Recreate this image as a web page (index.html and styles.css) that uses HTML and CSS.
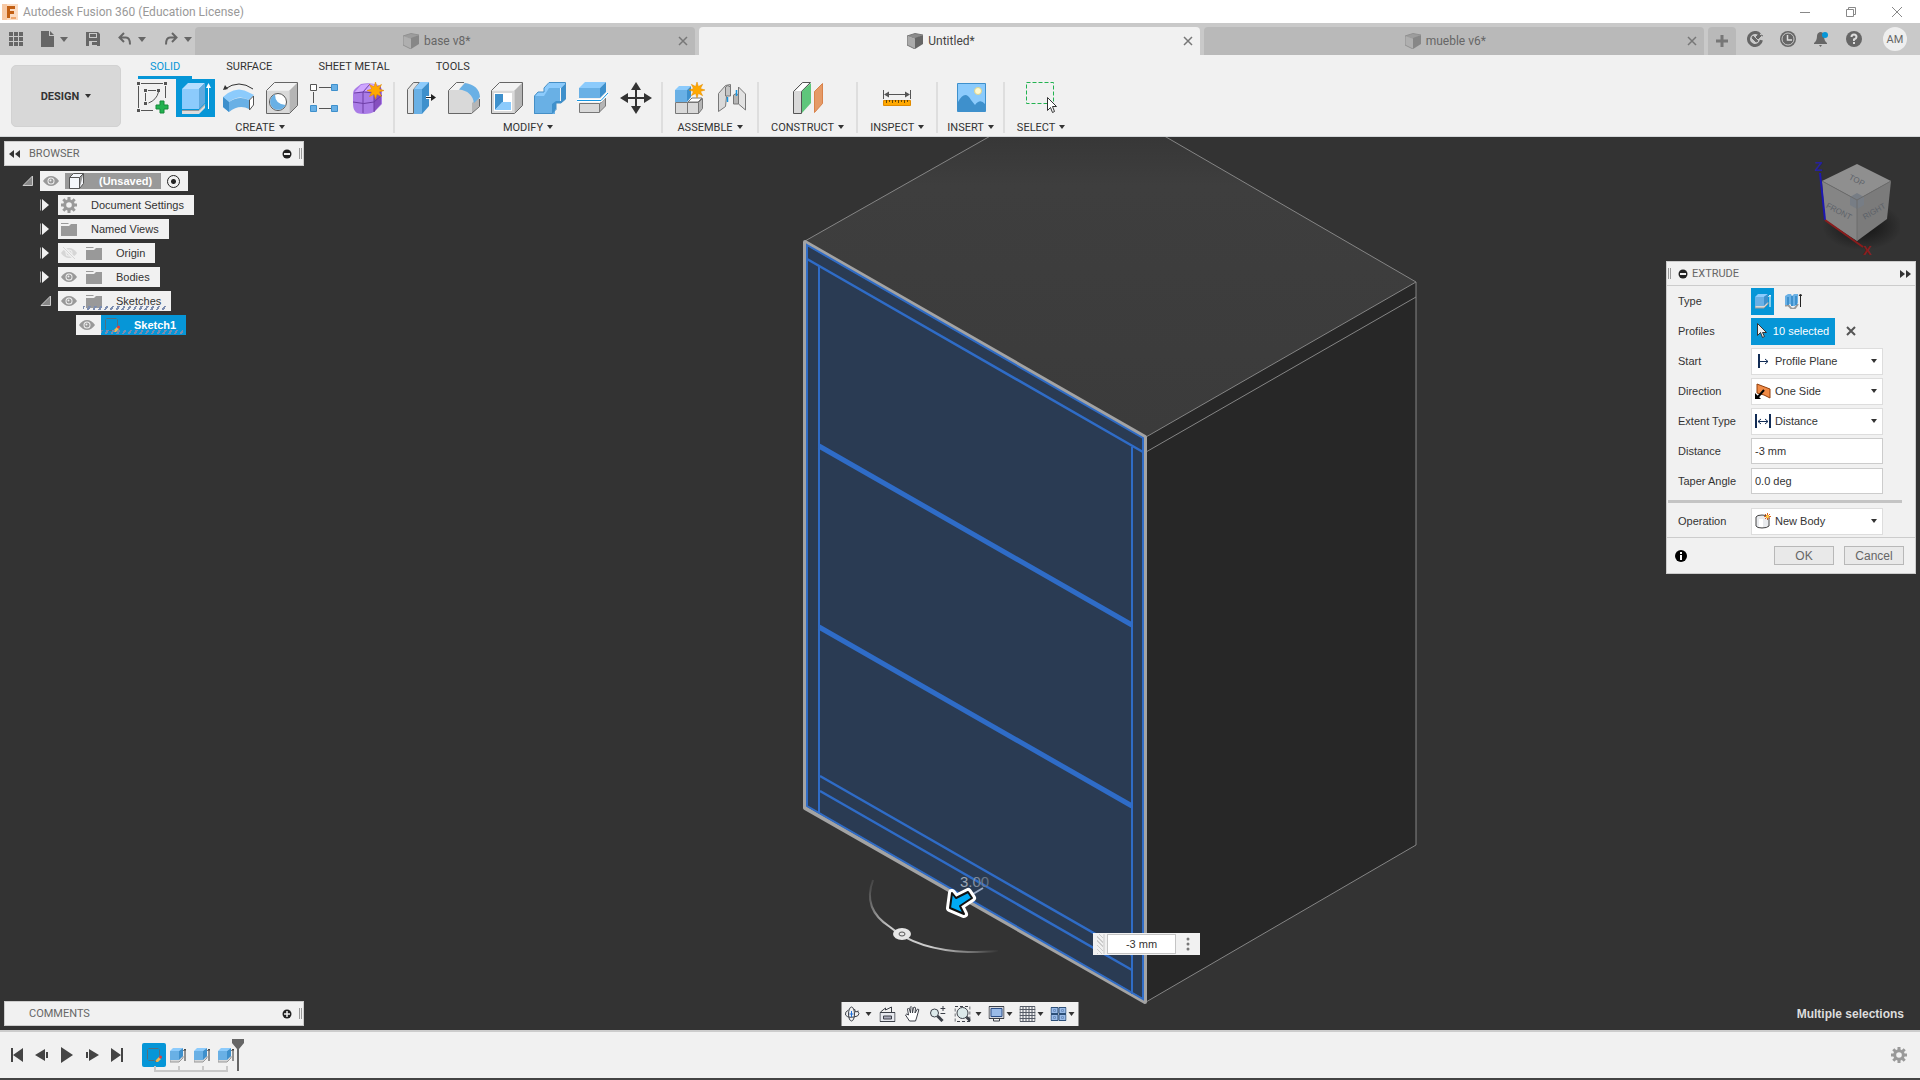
FILE: index.html
```html
<!DOCTYPE html>
<html lang="en">
<head>
    <meta charset="UTF-8">
    <meta name="viewport" content="width=device-width, initial-scale=1.0">
    <title>Autodesk Fusion 360 (Education License)</title>
    <link rel="stylesheet" href="styles.css">
</head>
<body>
    <!-- shared icons -->
    <svg class="symbols" aria-hidden="true">
        <symbol id="tab-cube" viewBox="0 0 16 16">
            <path d="M0 3 8 6v10L0 12z" fill="#aaa"/>
            <path d="M0 3 8 .5 16 2 8 6z" fill="#8c8c8c"/>
            <path d="M8 5 16 2v9l-8 5z" fill="#666"/>
            <path d="M0 3v9l8 4M0 3 8 .5 16 2" fill="none" stroke="#777"/>
        </symbol>
        <symbol id="close" viewBox="0 0 10 10">
            <path d="m1 1 8 8m0-8-8 8" stroke="#777" stroke-width="1.5"/>
        </symbol>
        <symbol id="eye" viewBox="0 0 16 16">
            <path d="M0 8Q3.5 3 8 3t8 5q-3.5 5-8 5T0 8z" fill="#999"/>
            <circle cx="8" cy="8" r="3.5" fill="#f1f1f1"/>
            <circle cx="8" cy="8" r="2.5" fill="#999"/>
            <circle cx="7.5" cy="7.5" r="1" fill="#eee"/>
        </symbol>
        <symbol id="folder" viewBox="0 0 16 16">
            <path d="M0 2h7l1 1H0zM0 5h8l2-2h6v12H0z" fill="#999"/>
        </symbol>
        <symbol id="gear" viewBox="0 0 16 16">
            <circle cx="8" cy="8" r="4.3" fill="none" stroke="#999" stroke-width="3"/>
            <path d="M8 0v3M8 13v3M0 8h3M13 8h3M2.3 2.3l2.2 2.2M11.5 11.5l2.2 2.2M2.3 13.7l2.2-2.2M11.5 4.5l2.2-2.2" stroke="#999" stroke-width="3"/>
        </symbol>
        <symbol id="closed" viewBox="0 0 10 14">
            <path d="M2 1 9 7 2 13z" fill="#f1f1f1"/>
            <path d="M.5 1.5v11" stroke="#aaa"/>
        </symbol>
        <symbol id="opened" viewBox="0 0 12 12">
            <path d="M10.500 1v9.500H1z" fill="#888" stroke="#ccc"/>
        </symbol>
        <symbol id="minus" viewBox="0 0 10 10">
            <circle cx="5" cy="5" r="4.500" fill="#222"/>
            <path d="M2 5h6" stroke="#f1f1f1" stroke-width="2"/>
        </symbol>
        <symbol id="extrude-small" viewBox="0 0 16 16">
            <path d="M0 13v2h9l4-4v-2" fill="#d8d8d8" stroke="#999"/>
            <path d="M0 4h9v9H0z" fill="#69b0e5"/>
            <path d="M0 4 3 1h10L9 4z" fill="#8ccbfc"/>
            <path d="M9 4 13 1v8l-4 4z" fill="#3e90cc"/>
            <path d="M15 3v11M13.500 4 15 2l1.500 2" stroke="currentColor" fill="none"/>
        </symbol>
        <symbol id="sketch-small" viewBox="0 0 16 16">
            <path d="M2.500 1.500h10M1.500 2.500v10M2.500 13.500h6M13.500 2.500v6" stroke="#53707f" fill="none"/>
            <path d="m9 15 1-2 3-3 2 2-3 3z" fill="#f5b74f"/>
            <path d="m9 15 .5-1.500 1 1z" fill="#555"/>
            <circle cx="14.500" cy="10" r="1.500" fill="#e5383b"/>
        </symbol>
        <symbol id="burst" viewBox="0 0 16 16">
            <path d="m8 0 1.400 4.500L13.700 2.300 11.500 6.600 16 8l-4.500 1.400 2.200 4.300-4.300-2.200L8 16l-1.400-4.500-4.300 2.200 2.200-4.300L0 8l4.500-1.400L2.300 2.300l4.300 2.200z" fill="#ffa800" stroke="#e08b00" stroke-width=".5"/>
        </symbol>
    </svg>

    <header class="titlebar">
        <svg class="logo" viewBox="0 0 16 16"><path d="M0 0h16v16H0z" fill="#fbdcc3"/><path d="M0 0h5v16H0z" fill="#f7c9a5"/><path d="M5 2h8v3H8v2h4v3H8v4H5z" fill="#c25f13"/><path d="M9 13h5v2H9z" fill="#f0a76d"/></svg>
        <span class="app-name">Autodesk Fusion 360 (Education License)</span>
        <div class="window-controls">
            <button aria-label="Minimize"><svg width="10" height="10"><path d="M0 5.500h10" stroke="#888"/></svg></button>
            <button aria-label="Restore"><svg width="10" height="10" fill="none" stroke="#888"><path d="M.5 2.500h7v7h-7zM2.500 2.500v-2h7v7h-2"/></svg></button>
            <button aria-label="Close"><svg width="10" height="10"><path d="m0 0 10 10M10 0 0 10" stroke="#888"/></svg></button>
        </div>
    </header>

    <nav class="tabbar">
        <div class="quick">
            <button aria-label="Data panel"><svg width="14" height="14" fill="#666"><path d="M0 0h4v4H0zM5 0h4v4H5zM10 0h4v4h-4zM0 5h4v4H0zM5 5h4v4H5zM10 5h4v4h-4zM0 10h4v4H0zM5 10h4v4H5zM10 10h4v4h-4z"/></svg></button>
            <button aria-label="File"><svg width="13" height="16" fill="#666"><path d="M0 0h8v5h5v11H0zM9 0l4 4H9z"/></svg><i class="caret"></i></button>
            <button aria-label="Save"><svg width="14" height="14"><path d="M0 0h12l2 2v12H0z" fill="#666"/><path d="M3 1h8v5H3zM3 9h8v5H3z" fill="#c9c9c9"/><path d="M4 2h6v3H4zM6 10h5v3H6z" fill="#666"/></svg></button>
            <button aria-label="Undo"><svg width="14" height="14" fill="none" stroke="#666" stroke-width="2"><path d="M6 1 1.500 5.500 6 10M2 5.500h6q4 0 4 7"/></svg><i class="caret"></i></button>
            <button aria-label="Redo"><svg width="14" height="14" fill="none" stroke="#666" stroke-width="2"><path d="m8 1 4.500 4.500L8 10M12 5.500H6q-4 0-4 7"/></svg><i class="caret"></i></button>
        </div>
        <div class="tabs">
            <div class="tab"><button class="tab-name"><svg class="faded"><use href="#tab-cube"/></svg>base v8*</button><button class="tab-close" aria-label="Close tab"><svg><use href="#close"/></svg></button></div>
            <div class="tab active"><button class="tab-name"><svg><use href="#tab-cube"/></svg>Untitled*</button><button class="tab-close" aria-label="Close tab"><svg><use href="#close"/></svg></button></div>
            <div class="tab"><button class="tab-name"><svg class="faded"><use href="#tab-cube"/></svg>mueble v6*</button><button class="tab-close" aria-label="Close tab"><svg><use href="#close"/></svg></button></div>
        </div>
        <button class="new-tab" aria-label="New tab"><svg width="12" height="12"><path d="M6 0v12M0 6h12" stroke="#777" stroke-width="3"/></svg></button>
        <div class="status-icons">
            <button aria-label="Extensions"><svg width="16" height="16"><circle cx="8" cy="8" r="6.500" fill="none" stroke="#666" stroke-width="3" stroke-dasharray="34 7" transform="rotate(10 8 8)"/><path d="m6 5 5 5-2 1-4-4zM9 6l3-3 2 2-3 3zM11 1l2 2M14 4l2 1" fill="#666" stroke="#666"/></svg></button>
            <button aria-label="Job status"><svg width="16" height="16"><circle cx="8" cy="8" r="8" fill="#666"/><circle cx="8" cy="8" r="6" fill="none" stroke="#c9c9c9"/><path d="M7.500 4v5H12" fill="none" stroke="#ddd" stroke-width="1.500"/></svg></button>
            <button aria-label="Notifications"><svg width="16" height="16"><path d="M1 12q3-2 3-7 0-3 3-4 4 0 4 4 0 5 3 7v1H1zM6 14h3l-1.500 2z" fill="#666"/><circle cx="12" cy="4" r="3" fill="#0696d7"/></svg></button>
            <button aria-label="Help"><svg width="16" height="16"><circle cx="8" cy="8" r="8" fill="#666"/><path d="M5.500 6q0-2.500 2.500-2.500T10.500 6Q10.500 7.500 8 8.500V10" fill="none" stroke="#ddd" stroke-width="2"/><path d="M7 11h2v2H7z" fill="#ddd"/></svg></button>
        </div>
        <button class="avatar">AM</button>
    </nav>

    <section class="ribbon">
        <button class="workspace">DESIGN <i class="caret"></i></button>
        <div class="ribbon-main">
            <div class="ribbon-tabs">
                <button class="current">SOLID</button>
                <button>SURFACE</button>
                <button>SHEET METAL</button>
                <button>TOOLS</button>
            </div>
            <div class="groups">
                <div class="group">
                    <div class="tools">
                        <button aria-label="Create Sketch"><svg viewBox="0 0 32 32"><path d="M4 1.500h22M1.500 4v22M28.500 4v12M4 28.500h12M11 8.500h8M8.500 11v8M21.500 10q-2 8-10 11" fill="none" stroke="#555"/><path d="M0 0h3v3H0zM27 0h3v3h-3zM0 27h3v3H0zM7 7h3v3H7zM20 7h3v3h-3zM7 20h3v3H7z" fill="#555"/><path d="M23 19h4v4h4v4h-4v4h-4v-4h-4v-4h4z" fill="#22b250" stroke="#168a3a"/></svg></button>
                        <button class="selected" aria-label="Extrude"><svg viewBox="0 0 32 32"><path d="M2 28h17l6-6v4l-6 6H2z" fill="#ddd"/><path d="M2 28.500h17l6-6" fill="none" stroke="#999"/><path d="M2 7h17v20H2z" fill="#8ccbfc"/><path d="m2 7 6-6h17l-6 6z" fill="#b5deff"/><path d="m19 7 6-6v20l-6 6z" fill="#5fa9df"/><path d="M28.500 3v24" stroke="#fff"/><path d="m26 6 2.500-5L31 6z" fill="#fff"/></svg></button>
                        <button aria-label="Revolve"><svg viewBox="0 0 32 32"><path d="M2 7Q16-3 30 7" fill="none" stroke="#333"/><path d="m0 8 2-5 3 4z" fill="#333"/><path d="m0 15 5-4q11-7 22 0l4 2-5 5q-10-6-20 2z" fill="#8ccbfc"/><path d="m0 15 6 5q10-7 20-2v9q-10-5-20 3l-6-5z" fill="#69b0e5"/><path d="m0 15 6 5v10l-6-5z" fill="#3e90cc"/><path d="m26.500 18 4-4v9l-4 5z" fill="#fff" stroke="#555"/></svg></button>
                        <button aria-label="Hole"><svg viewBox="0 0 32 32"><path d="M.5 8.500h23v23H.5z" fill="#d9d9d9"/><path d="m.5 8.500 8-8h23l-8 8z" fill="#f3f3f3"/><path d="m23.500 8.500 8-8v23l-8 8z" fill="#b5b5b5"/><path d="m.5 8.500 8-8h23v23l-8 8H.5z" fill="none" stroke="#666"/><circle cx="12" cy="20" r="8.500" fill="#fff" stroke="#555"/><path d="M9 12.500a8 8 0 1 0 10.500 10.500Q9 22 9 12.500z" fill="#69b0e5"/></svg></button>
                        <button aria-label="Rectangular Pattern"><svg viewBox="0 0 32 32"><path d="M10 5.500h12M4.500 10v11M10 26.500h12" stroke="#555"/><path d="M1.500 2.500h6v6h-6z" fill="#fff" stroke="#555"/><path d="M22.500 2.500h6v6h-6zM1.500 23.500h6v6h-6zM22.500 23.500h6v6h-6z" fill="#69b0e5" stroke="#3e90cc"/></svg></button>
                        <button aria-label="Create Form"><svg viewBox="0 0 32 32"><path d="M1 12q0-4 3-6l5-4q9-2 17 1 4 2 4 6v13l-7 7q-3 3-11 3T3 29q-2-2-2-8z" fill="#a97be6"/><path d="M2 11 9 3q8-2 17 0l-4 7q-10-2-20 1z" fill="#cfa6ff"/><path d="M22 10l7-6v18l-7 8z" fill="#8650bf"/><path d="M1 20q11 3 21 0l8-7M11 31V10l7-8M2 11q10-2 20 0v19" fill="none" stroke="#6d3da5"/><use href="#burst" x="15" y="0" width="17" height="17"/></svg></button>
                    </div>
                    <button class="group-name">CREATE <i class="caret"></i></button>
                </div>
                <div class="divider"></div>
                <div class="group">
                    <div class="tools">
                        <button aria-label="Press Pull"><svg viewBox="0 0 32 32"><path d="m2.500 7.500 6-7h6l-6 7v24h-6z" fill="#e5e5e5" stroke="#666"/><path d="M9 7h8v25H9z" fill="#69b0e5"/><path d="m9 7 6-7h9l-7 7z" fill="#8ccbfc"/><path d="m17 7 7-7v24l-7 8z" fill="#3e90cc"/><path d="M21 15.500h8" stroke="#fff" stroke-width="3"/><path d="M21 15.500h6" stroke="#222"/><path d="m26 12 5 3.500-5 3.500z" fill="#222"/></svg></button>
                        <button aria-label="Fillet"><svg viewBox="0 0 32 32"><path d="M.5 8.500 8 .5h8q14 3 15.500 13v11l-8 7H.5z" fill="#d9d9d9"/><path d="m24 21 7-6v9l-7 7z" fill="#b5b5b5"/><path d="m1 8 7-7h8l-5 7z" fill="#f3f3f3"/><path d="M11 7.500 17 1q14 2 15 14l-6 6Q24 9 11 7.500z" fill="#69b0e5"/><path d="M31.500 17v7.500l-8 7H.5v-23l8-8H16" fill="none" stroke="#666"/></svg></button>
                        <button aria-label="Shell"><svg viewBox="0 0 32 32"><path d="M.5 8.500h23v23H.5z" fill="#d9d9d9"/><path d="m.5 8.500 8-8h23l-8 8z" fill="#f3f3f3"/><path d="m23.500 8.500 8-8v23l-8 8z" fill="#b5b5b5"/><path d="m.5 8.500 8-8h23v23l-8 8H.5z" fill="none" stroke="#666"/><path d="M3 11h18v18H3z" fill="#fff"/><path d="M4 12h8v8l-8 8z" fill="#3e90cc"/><path d="M4 28l7-8h9v8z" fill="#8ccbfc"/></svg></button>
                        <button aria-label="Combine"><svg viewBox="0 0 32 32"><path d="M0 14h10V6h16v15h-5v11H0z" fill="#69b0e5"/><path d="m0 14 4-4h6V6l5-5h17l-5 5H15l-5 8z" fill="#8ccbfc"/><path d="m27 6 5-5v16l-5 4h-5v6l-4 5V22l4-3h5z" fill="#3e90cc"/><path d="M.5 14v17.500H18l4-4V21h5l4.500-4V.5H15L10 6v4H4z" fill="none" stroke="#458fc6"/></svg></button>
                        <button aria-label="Split Body"><svg viewBox="0 0 32 32"><path d="M2 6h21v10H2z" fill="#69b0e5"/><path d="m2 6 6-6h21l-6 6z" fill="#8ccbfc"/><path d="m23 6 6-6v10l-6 6z" fill="#3e90cc"/><path d="M2.500 21.500h20v9h-20z" fill="#d9d9d9" stroke="#777"/><path d="m22.500 22 6-6v8l-6 6z" fill="#b5b5b5" stroke="#777"/><path d="M0 18.500h24L31 11" fill="none" stroke="#fff" stroke-width="3"/><path d="M0 18.500h24L31 11" fill="none" stroke="#1595e0"/></svg></button>
                        <button aria-label="Move"><svg viewBox="0 0 32 32"><path d="M16 5v22M5 16h22" stroke="#333" stroke-width="2"/><path d="m16 0 5 8H11zM16 32l5-8H11zM0 16l8-5v10zM32 16l-8-5v10z" fill="#333"/></svg></button>
                    </div>
                    <button class="group-name">MODIFY <i class="caret"></i></button>
                </div>
                <div class="divider"></div>
                <div class="group">
                    <div class="tools">
                        <button aria-label="New Component"><svg viewBox="0 0 32 32"><path d="M2.500 20.500h12v11h-12zM14.500 20.500h11v11h-11z" fill="#d9d9d9" stroke="#777"/><path d="m15 20 4-4h10l-4 4z" fill="#fff" stroke="#777"/><path d="m25.500 20.500 4-4v10l-4 5z" fill="#b5b5b5" stroke="#777"/><path d="M2 8h12v12H2z" fill="#69b0e5"/><path d="m2 8 4-4h12l-4 4z" fill="#8ccbfc"/><path d="m14 8 4-4v11l-4 5z" fill="#3e90cc"/><use href="#burst" x="16" y="0" width="16" height="16"/></svg></button>
                        <button aria-label="Joint"><svg viewBox="0 0 32 32"><path d="m2.500 11.500 7-8 5-1v8l-4 4-1 10-7 5z" fill="#d9d9d9" stroke="#777"/><path d="M9.500 5q2-3 5 0v9h-5z" fill="#c4c4c4" stroke="#777"/><path d="m22.500 5 7 7v16l-7-6z" fill="#e2e2e2" stroke="#777"/><path d="M17.500 13q3-3 5 0v9h-5z" fill="#b5b5b5" stroke="#777"/><path d="M11.500 15v5M20.500 8v6" stroke="#1595e0" stroke-width="1.500"/></svg></button>
                    </div>
                    <button class="group-name">ASSEMBLE <i class="caret"></i></button>
                </div>
                <div class="divider"></div>
                <div class="group">
                    <div class="tools"><button aria-label="Offset Plane"><svg viewBox="0 0 32 32"><path d="m1.500 9.500 9-9h8l-9 9v22h-8z" fill="#d9d9d9" stroke="#555"/><path d="m3 9 8-8h6L9 9z" fill="#fff"/><path d="m10 9 9-8v20l-9 10z" fill="#5fc67b"/><path d="m22.500 9.500 8-8v20l-8 9z" fill="#e59a66" stroke="#d9824a"/></svg></button></div>
                    <button class="group-name">CONSTRUCT <i class="caret"></i></button>
                </div>
                <div class="divider"></div>
                <div class="group">
                    <div class="tools"><button aria-label="Measure"><svg viewBox="0 0 32 32"><path d="M2.500 8v9M29.500 8v9M5 12.500h22" stroke="#555"/><path d="m3 12.500 5-3v6zM29 12.500l-5-3v6z" fill="#555"/><path d="M2.500 18.500h27v5h-27z" fill="#ffa800" stroke="#e08b00"/><path d="M5.500 18v3M8.500 18v2M11.500 18v3M14.500 18v2M17.500 18v3M20.500 18v2M23.500 18v3M26.500 18v2" stroke="#6a4800"/></svg></button></div>
                    <button class="group-name">INSPECT <i class="caret"></i></button>
                </div>
                <div class="divider"></div>
                <div class="group narrow">
                    <div class="tools"><button aria-label="Decal"><svg viewBox="0 0 32 32"><path d="M2.500 1.500h28v28h-28z" fill="#8ccbfc"/><path d="M3 20q7-13 13-2l4 5q5-7 10-1v8H3z" fill="#3e90cc"/><circle cx="23" cy="9" r="3.500" fill="#fff9cf" stroke="#ddd48d"/><path d="M2.500 1.500h28v28h-28z" fill="none" stroke="#3e90cc"/></svg></button></div>
                    <button class="group-name">INSERT <i class="caret"></i></button>
                </div>
                <div class="divider"></div>
                <div class="group">
                    <div class="tools"><button aria-label="Select"><svg viewBox="0 0 32 32"><path d="M1.500 .5h27v21h-27z" fill="none" stroke="#22b250" stroke-dasharray="4 2"/><path d="M22.500 15.500v13l3-3 2 5 2-1-2-5h4z" fill="#fff" stroke="#333"/></svg></button></div>
                    <button class="group-name">SELECT <i class="caret"></i></button>
                </div>
            </div>
        </div>
    </section>

    <main class="canvas">
        <svg class="model" viewBox="0 137 1920 893" preserveAspectRatio="xMidYMid slice">
            <defs>
                <linearGradient id="top-face" x1="0" y1="0" x2="0" y2="1"><stop offset="0" stop-color="#363636"/><stop offset=".18" stop-color="#3e3e3e"/><stop offset="1" stop-color="#3b3b3b"/></linearGradient>
                <linearGradient id="arc-fade" gradientUnits="userSpaceOnUse" x1="868" y1="878" x2="998" y2="953"><stop offset="0" stop-color="#ddd" stop-opacity="0"/><stop offset=".3" stop-color="#ccc"/><stop offset=".6" stop-color="#ccc"/><stop offset="1" stop-color="#ddd" stop-opacity="0"/></linearGradient>
                <linearGradient id="size-fade"><stop offset="0" stop-color="#a9b3c0"/><stop offset="1" stop-color="#5d6b7d"/></linearGradient>
            </defs>
            <!-- cabinet body -->
            <path d="M805 241 1001 130h153l262 152-270 155z" fill="url(#top-face)"/>
            <path d="m1146 437 270-155v563l-270 157z" fill="#272727"/>
            <path d="M805 241 1001 130M1154 130l262 152v563l-270 157M1416 282l-270 155M1416 297l-270 155" fill="none" stroke="#858585"/>
            <!-- selected front profiles -->
            <path d="m805 242 340 195v565L805 808z" fill="#2a3b53" stroke="#a3a3a3" stroke-width="4" stroke-linejoin="round"/>
            <path d="m807 245 336 193v561L807 806z" fill="none" stroke="#2f6cc7" stroke-width="2"/>
            <path d="M819 266v547M1132 447v547" stroke="#2f6cc7" stroke-width="2"/>
            <path d="m807 259 336 193M820 776l312 179M820 791l312 179" fill="none" stroke="#2f6cc7" stroke-width="2.500"/>
            <path d="m819 446 313 179M819 627l313 179" fill="none" stroke="#2f6cc7" stroke-width="5"/>
            <!-- manipulator -->
            <path d="M873 880q-11 29 17 47 27 23 78 25 18 0 30-1" fill="none" stroke="url(#arc-fade)" stroke-width="2"/>
            <ellipse cx="902" cy="934" rx="9" ry="6" fill="#e6e6e6"/>
            <ellipse cx="902" cy="934" rx="3" ry="2" fill="none" stroke="#555"/>
            <path d="m968 897 15-9" stroke="#9aabc6" stroke-width="2"/>
            <text class="size" x="960" y="887" fill="url(#size-fade)">3.00</text>
            <path d="m950 908 2-15 4 5 12-6 4 6-12 8 4 8z" fill="#fff" stroke="#fff" stroke-width="8" stroke-linejoin="round"/>
            <path d="m950 908 2-15 4 5 12-6 4 6-12 8 4 8z" fill="#00a9f4" stroke="#111" stroke-width="2" stroke-linejoin="round"/>
        </svg>

        <div class="left-side">
            <section class="browser">
                <div class="palette-bar">
                    <svg width="11" height="8" fill="#333"><path d="m5 0v8L0 4zM11 0v8L6 4z"/></svg>
                    <span>BROWSER</span>
                    <svg width="10" height="10"><use href="#minus"/></svg>
                    <i class="grip"></i>
                </div>
                <ul class="tree">
                    <li class="root">
                        <button class="toggle" aria-label="Collapse"><svg width="12" height="12"><use href="#opened"/></svg></button>
                        <div class="node"><svg><use href="#eye"/></svg><span class="doc"><svg><path d="M1.500 4.500h10v11h-10zM1.500 4.500l4-4h10l-4 4M11.500 15.500l4-5V.5" fill="#f4f6fa" stroke="#555"/></svg><b>(Unsaved)</b></span>
                        <input type="radio" name="active-component" aria-label="Activate component" checked></div>
                    </li>
                    <li><button class="toggle" aria-label="Expand"><svg width="10" height="14"><use href="#closed"/></svg></button><div class="node"><svg><use href="#gear"/></svg><span>Document Settings</span></div></li>
                    <li><button class="toggle" aria-label="Expand"><svg width="10" height="14"><use href="#closed"/></svg></button><div class="node"><svg><use href="#folder"/></svg><span>Named Views</span></div></li>
                    <li><button class="toggle" aria-label="Expand"><svg width="10" height="14"><use href="#closed"/></svg></button><div class="node"><svg class="hidden-eye"><use href="#eye"/><path d="m2 2 12 12" stroke="#f1f1f1" stroke-width="3"/><path d="m2 2 12 12" stroke="#999"/></svg><svg><use href="#folder"/></svg><span>Origin</span></div></li>
                    <li><button class="toggle" aria-label="Expand"><svg width="10" height="14"><use href="#closed"/></svg></button><div class="node"><svg><use href="#eye"/></svg><svg><use href="#folder"/></svg><span>Bodies</span></div></li>
                    <li><button class="toggle" aria-label="Collapse"><svg width="12" height="12"><use href="#opened"/></svg></button><div class="node hatched"><svg><use href="#eye"/></svg><svg><use href="#folder"/></svg><span>Sketches</span></div></li>
                    <li class="leaf"><div class="node picked hatched"><svg><use href="#eye"/></svg><svg><use href="#sketch-small"/></svg><b>Sketch1</b></div></li>
                </ul>
            </section>
            <section class="palette-bar comments">
                <span>COMMENTS</span>
                <svg width="10" height="10"><circle cx="5" cy="5" r="4.500" fill="#222"/><path d="M2 5h6M5 2v6" stroke="#f1f1f1" stroke-width="1.500"/></svg>
                <i class="grip"></i>
            </section>
        </div>

        <svg class="viewcube" viewBox="1800 150 100 110">
            <defs><radialGradient id="cube-shadow"><stop offset="0" stop-color="#111"/><stop offset="1" stop-color="#333"/></radialGradient></defs>
            <ellipse cx="1862" cy="226" rx="40" ry="24" fill="url(#cube-shadow)"/>
            <path d="m1822 181 35-17 34 17-34 19z" fill="#8f8f8f"/>
            <path d="m1822 181 35 19v41l-32-21z" fill="#858585"/>
            <path d="m1857 200 34-19-4 38-30 22z" fill="#7b7b7b"/>
            <path d="m1850 197 7-4 7 4v8l-7 4-7-4z" fill="#777d85"/>
            <path d="m1822 181 35 19 34-19M1857 200v41" fill="none" stroke="#6c6c6c"/>
            <text x="1857" y="183" transform="rotate(27 1857 180)">TOP</text>
            <text x="1839" y="214" transform="rotate(28 1839 211)">FRONT</text>
            <text x="1874" y="214" transform="rotate(-30 1874 211)">RIGHT</text>
            <path d="m1820 173 5 47" stroke="#1d17b3" stroke-width="2"/>
            <path d="m1825 220 38 27" stroke="#8a1c1c" stroke-width="2"/>
            <text class="axis axis-z" x="1819" y="171">Z</text>
            <text class="axis axis-x" x="1867" y="255">X</text>
        </svg>

        <form class="extrude" onsubmit="return false">
            <h2><i class="grip"></i><svg width="10" height="10"><use href="#minus"/></svg><span>EXTRUDE</span><svg width="11" height="8" fill="#333"><path d="m0 0 5 4-5 4zM6 0l5 4-5 4z"/></svg></h2>
            <div class="field">
                <span class="field-name">Type</span>
                <button class="type on" aria-label="Extrude"><svg width="16" height="16"><use href="#extrude-small"/></svg></button>
                <button class="type" aria-label="Thin Extrude"><svg width="17" height="16"><path d="M0 13q3-2 5 1t5 1l3-4" fill="none" stroke="#999" stroke-width="2"/><path d="M0 3l3-2h3l1 2 2-2h4v9l-3 3H7l-2-2-2 1H0z" fill="#69b0e5"/><path d="M3 4v8M7 3v10M11 3v9" stroke="#3e90cc" stroke-width="2"/><path d="M15.500 2v12M14 3l1.500-2L17 3" fill="none" stroke="#222"/></svg></button>
            </div>
            <div class="field">
                <span class="field-name">Profiles</span>
                <button class="pick"><svg width="10" height="16"><path d="M.5.5v12l3-3 2 5 2-1-2-4h4z" fill="#eee" stroke="#333"/></svg>10 selected</button>
                <button class="clear" aria-label="Clear selection"><svg width="10" height="10"><path d="m1 1 8 8m0-8-8 8" stroke="#555" stroke-width="2"/></svg></button>
            </div>
            <div class="field">
                <label for="start">Start</label>
                <div class="combo"><svg width="16" height="16"><path d="M4 1v14" stroke="#122c55" stroke-width="2"/><path d="M5 8.500h8M10 6l3 2.500L10 11" fill="none" stroke="#122c55"/></svg><select id="start"><option>Profile Plane</option></select><i class="caret"></i></div>
            </div>
            <div class="field">
                <label for="direction">Direction</label>
                <div class="combo"><svg width="16" height="16"><path d="m2 1 13 5v9L9 12 2 10z" fill="#f08a45" stroke="#913e0b"/><path d="m9 7-7 8" stroke="#000" stroke-width="2"/><path d="M0 16v-6l6 6z"/></svg><select id="direction"><option>One Side</option></select><i class="caret"></i></div>
            </div>
            <div class="field">
                <label for="extent">Extent Type</label>
                <div class="combo"><svg width="16" height="16"><path d="M1 1v14M15 1v14" stroke="#122c55" stroke-width="2"/><path d="M3 8.500h10M6 6 3 8.500 6 11M10 6l3 2.500-3 2.500" fill="none" stroke="#122c55"/></svg><select id="extent"><option>Distance</option></select><i class="caret"></i></div>
            </div>
            <div class="field">
                <label for="distance">Distance</label>
                <input type="text" id="distance" value="-3 mm">
            </div>
            <div class="field">
                <label for="taper">Taper Angle</label>
                <input type="text" id="taper" value="0.0 deg">
            </div>
            <div class="rule"></div>
            <div class="field">
                <label for="operation">Operation</label>
                <div class="combo"><svg width="16" height="16"><path d="M1 4v9q1 2 6 2t7-2V4q-2-2-7-2T1 4z" fill="#e9ebee" stroke="#444"/><path d="M4 6h4v8H4z" fill="#fff"/><path d="M12.500 0v7M9 3.500h7M10 1l5 5M15 1l-5 5" stroke="#e0641a"/><circle cx="12.500" cy="3.500" r="1.500" fill="#ffd24a"/></svg><select id="operation"><option>New Body</option></select><i class="caret"></i></div>
            </div>
            <div class="actions">
                <svg width="12" height="12"><circle cx="6" cy="6" r="6"/><path d="M5 2h2v2H5zM5 5h2v5H5z" fill="#fff"/></svg>
                <button>OK</button>
                <button>Cancel</button>
            </div>
        </form>

        <div class="float-input">
            <i class="handle"></i>
            <input type="text" value="-3 mm" aria-label="Distance">
            <button aria-label="More"><svg width="4" height="14" fill="#777"><circle cx="2" cy="2" r="1.500"/><circle cx="2" cy="7" r="1.500"/><circle cx="2" cy="12" r="1.500"/></svg></button>
        </div>

        <div class="navbar">
            <button class="spaced" aria-label="Orbit"><svg viewBox="0 0 16 16" fill="none" stroke="#3c4048"><ellipse cx="7" cy="8" rx="3" ry="7"/><path d="M4 4q-4 2-3 5 3 4 12 1 3-2 0-5"/><path d="M7 5v6M5 8h4" stroke="#1d6ed8"/><path d="m10 3 1 3 3-1"/></svg><i class="caret"></i></button>
            <button class="plain" aria-label="Look At"><svg viewBox="0 0 16 16" fill="none" stroke="#3c4048"><path d="M.5 6.500h15v9H.5z" fill="#e8eaf0"/><path d="M4 10h8v3H4z" fill="#aab"/><path d="m1 6 5-4v2l6-3v5"/></svg></button>
            <button class="plain" aria-label="Pan"><svg viewBox="0 0 16 16" fill="#fff" stroke="#3c4048"><path d="M5 15 1 9q1-2 3 0L3 3q1-2 2 0l1 4-.5-5.500q1.500-2 2 0L8 7l1-5.500q2-1 2 .5l-.5 5L13 3q2 0 1 2l-2 7-1 3z"/></svg></button>
            <button class="plain" aria-label="Zoom"><svg viewBox="0 0 16 16" fill="none" stroke="#3c4048"><circle cx="5" cy="7" r="4" fill="#dce9ea"/><path d="m8 10 5 5" stroke-width="3"/><path d="M13.500 0v5M11 2.500h5M11 7.500h5"/></svg></button>
            <button class="spaced" aria-label="Fit"><svg viewBox="0 0 16 16" fill="none" stroke="#3c4048"><path d="M.5.500h15v15H.5z" stroke-dasharray="3 2"/><circle cx="8" cy="7" r="5.500" fill="#dce9ea"/><path d="m12 11 4 4" stroke-width="3"/></svg><i class="caret"></i></button>
            <button aria-label="Display Settings"><svg viewBox="0 0 16 16" fill="none" stroke="#3c4048"><path d="M.5.500h15v12H.5z" fill="#d6d8dd"/><path d="M2.500 2.500h11v8h-11z" fill="#9abbe8" stroke="#2c4f88"/><path d="M5 13v2h6v-2"/></svg><i class="caret"></i></button>
            <button aria-label="Grid"><svg viewBox="0 0 16 16" fill="none" stroke="#555b66"><path d="M.5.500h15v15H.5zM3.500 0v16M6.500 0v16M9.500 0v16M12.500 0v16M0 3.500h16M0 6.500h16M0 9.500h16M0 12.500h16"/></svg><i class="caret"></i></button>
            <button aria-label="Viewports"><svg viewBox="0 0 16 16" fill="#9abbe8" stroke="#2c4f78"><path d="M.5 1.500h7v6h-7zM8.500 1.500h7v6h-7zM.5 8.500h7v6h-7zM8.500 8.500h7v6h-7z"/><path d="M3 3.500h2v2H3zM11 3.500h2v2h-2zM3 10.500h2v2H3zM11 10.500h2v2h-2z" stroke="#6f92c2"/></svg><i class="caret"></i></button>
        </div>

        <p class="selection-info">Multiple selections</p>
    </main>

    <footer class="timeline">
        <div class="player">
            <button aria-label="Go to start"><svg viewBox="0 0 16 16"><path d="M2 1h2v14H2zM14 1v14L4 8z"/></svg></button>
            <button aria-label="Step back"><svg viewBox="0 0 16 16"><path d="M11 2v12L1 8zM12 5h2v6h-2z"/></svg></button>
            <button aria-label="Play"><svg viewBox="0 0 16 16"><path d="m2 0 12 8-12 8z"/></svg></button>
            <button aria-label="Step forward"><svg viewBox="0 0 16 16"><path d="m5 2 10 6-10 6zM2 5h2v6H2z"/></svg></button>
            <button aria-label="Go to end"><svg viewBox="0 0 16 16"><path d="M12 1h2v14h-2zM2 1l10 7-10 7z"/></svg></button>
        </div>
        <div class="features">
            <button class="on" aria-label="Sketch1"><svg><use href="#sketch-small"/></svg></button>
            <button aria-label="Extrude1"><svg><use href="#extrude-small"/></svg></button>
            <button aria-label="Extrude2"><svg><use href="#extrude-small"/></svg></button>
            <button aria-label="Extrude3"><svg><use href="#extrude-small"/></svg></button>
            <svg class="links" viewBox="0 0 75 7"><path d="M1 0v5h73M25 0v5M49 0v5M73 0v5" fill="none" stroke="#c9c9c9" stroke-width="2"/></svg>
        </div>
        <svg class="marker" viewBox="0 0 12 32"><path d="M0 0h12v4L7 10v22H5V10L0 4z" fill="#666"/></svg>
        <button class="settings" aria-label="Timeline settings"><svg width="16" height="16"><use href="#gear"/></svg></button>
    </footer>
</body>
</html>
```

FILE: styles.css
```css
* {
    margin: 0;
    padding: 0;
    box-sizing: border-box;
}

body {
    display: flex;
    flex-direction: column;
    height: 100vh;
    overflow: hidden;
    background: #f1f1f1;
    color: #333;
    font-family: "Liberation Sans", Arial, sans-serif;
    font-size: 11px;
}

button {
    display: flex;
    align-items: center;
    justify-content: center;
    border: none;
    background: none;
    color: inherit;
    font: inherit;
}

svg {
    display: block;
    flex: none;
}

.symbols {
    position: absolute;
    width: 0;
    height: 0;
}

.caret {
    width: 0;
    height: 0;
    border: 3px solid transparent;
    border-top: 4px solid #333;
    border-bottom: none;
}

/* title bar */
.titlebar {
    display: flex;
    align-items: center;
    height: 23px;
    padding-left: 2px;
    background: #fff;
}

.logo {
    width: 16px;
    height: 16px;
}

.app-name {
    flex: 1;
    margin-left: 5px;
    color: #999;
    font-family: Roboto, sans-serif;
    font-size: 12px;
}

.window-controls {
    display: flex;
}

.window-controls button {
    width: 46px;
    height: 20px;
}

/* document tabs */
.tabbar {
    display: flex;
    height: 32px;
    background: #c9c9c9;
    color: #666;
    font-family: Roboto, sans-serif;
}

.quick {
    display: flex;
    width: 195px;
    padding-left: 9px;
    gap: 18px;
}

.quick button {
    gap: 6px;
}

.quick .caret {
    border-width: 5px 4px 0;
    border-top-color: #666;
}

.tabs {
    display: flex;
    flex: 1;
    gap: 4px;
    padding-top: 4px;
}

.tab {
    display: flex;
    flex: 1;
    padding-right: 7px;
    border-radius: 4px 4px 0 0;
    background: #b9b9b9;
    font-size: 12px;
}

.tab.active {
    background: #f1f1f1;
    color: #444;
}

.tab-name {
    flex: 1;
    gap: 5px;
}

.tab-name svg {
    width: 16px;
    height: 16px;
}

.tab-name .faded {
    opacity: 0.6;
}

.tab-close svg {
    width: 10px;
    height: 10px;
}

.new-tab {
    width: 28px;
    margin: 4px 11px 0 4px;
    border-radius: 4px 4px 0 0;
    background: #b9b9b9;
}

.status-icons {
    display: flex;
    gap: 17px;
}

.avatar {
    width: 24px;
    height: 24px;
    margin: 4px 13px 4px 21px;
    border-radius: 50%;
    background: #eee;
}

/* ribbon */
.ribbon {
    display: flex;
    height: 82px;
    border-bottom: 1px solid #d5d8da;
    font-family: Roboto, sans-serif;
}

.workspace {
    gap: 6px;
    width: 110px;
    height: 62px;
    margin: 10px 7px 0 11px;
    border: 1px solid #d2d2d2;
    border-radius: 5px;
    background: #d8d8d8;
    font-weight: bold;
}

.ribbon-tabs {
    display: flex;
    gap: 22px;
    height: 24px;
    padding-left: 10px;
}

.ribbon-tabs button {
    padding: 0 12px;
    border-top: 1px solid transparent;
    border-bottom: 3px solid transparent;
}

.ribbon-tabs .current {
    border-bottom-color: #0696d7;
    color: #0696d7;
}

.groups {
    display: flex;
}

.group {
    display: flex;
    flex-direction: column;
    align-items: center;
    padding: 0 3px;
}

.tools {
    display: flex;
}

.tools button {
    width: 39px;
    height: 38px;
    margin: 0 2px;
}

.tools .selected {
    background: #0696d7;
}

.tools svg {
    width: 32px;
    height: 32px;
}

.group-name {
    gap: 4px;
    height: 20px;
    padding: 0 8px;
}

.group.narrow {
    padding: 0;
}

.divider {
    width: 2px;
    height: 51px;
    margin: 3px 1px 0;
    background: #dedede;
}

/* canvas */
.canvas {
    position: relative;
    flex: 1;
    display: flex;
    justify-content: space-between;
    align-items: flex-start;
    min-height: 0;
    padding: 4px;
    background: #333;
}

.model {
    position: absolute;
    top: 0;
    left: 0;
    width: 100%;
    height: 100%;
}

.size {
    font-family: "Liberation Sans", Arial, sans-serif;
    font-size: 15px;
}

.left-side {
    position: relative;
    display: flex;
    flex-direction: column;
    justify-content: space-between;
    width: 300px;
    height: 100%;
}

.palette-bar {
    display: flex;
    align-items: center;
    height: 25px;
    padding: 0 1px 0 4px;
    border: 1px solid #ccc;
    background: #f1f1f1;
    color: #666;
    font-family: Roboto, sans-serif;
}

.palette-bar span {
    flex: 1;
    margin-left: 9px;
}

.palette-bar.comments span {
    margin-left: 20px;
}

.grip {
    width: 3px;
    height: 11px;
    border: 1px solid #999;
    border-width: 0 1px;
}

.palette-bar .grip {
    margin-left: 7px;
}

.tree {
    list-style: none;
    padding: 5px 0 0 36px;
}

.tree li {
    display: flex;
    height: 20px;
    margin-bottom: 4px;
}

.tree .root {
    margin-left: -18px;
}

.tree .leaf {
    margin-left: 36px;
}

.toggle {
    width: 18px;
    padding-right: 1px;
    justify-content: flex-start;
}

.node {
    position: relative;
    display: flex;
    align-items: center;
    gap: 9px;
    padding: 0 10px 0 3px;
    background: #f1f1f1;
}

.node svg {
    width: 16px;
    height: 16px;
}

.node > span:last-child,
.node > b {
    margin-left: 5px;
}

.hidden-eye {
    opacity: 0.3;
}

.root .node {
    gap: 6px;
    padding-right: 8px;
}

.doc {
    display: flex;
    align-items: center;
    gap: 15px;
    height: 16px;
    padding: 0 9px 0 3px;
    background: #999;
    color: #fff;
}

.node input {
    appearance: none;
    width: 13px;
    height: 13px;
    border: 1px solid #222;
    border-radius: 50%;
    background: radial-gradient(#222 2px, transparent 3px);
}

.node.picked {
    background: linear-gradient(90deg, #f1f1f1 25px, #0696d7 25px);
    color: #fff;
}

.hatched::after {
    content: "";
    position: absolute;
    right: 3px;
    bottom: 1px;
    left: 25px;
    height: 4px;
    background: repeating-linear-gradient(120deg, #7c8db0 0, #7c8db0 2px, transparent 2px, transparent 5px);
}

/* view cube */
.viewcube {
    position: absolute;
    top: 13px;
    right: 20px;
    width: 100px;
    height: 110px;
    font-family: "Liberation Sans", Arial, sans-serif;
    font-size: 8px;
    text-anchor: middle;
}

.viewcube text {
    fill: #5d6269;
}

.viewcube .axis {
    font-size: 13px;
    font-weight: bold;
}

.viewcube .axis-z {
    fill: #2520a0;
}

.viewcube .axis-x {
    fill: #8a1c1c;
}

/* extrude dialog */
.extrude {
    position: relative;
    width: 250px;
    margin-top: 120px;
    border: 1px solid #ccc;
    background: #f1f1f1;
}

.extrude h2 {
    display: flex;
    align-items: center;
    gap: 4px;
    height: 24px;
    padding: 0 4px 0 1px;
    border-bottom: 1px solid #ccc;
    color: #666;
    font-family: Roboto, sans-serif;
    font-size: 11px;
    font-weight: normal;
}

.extrude h2 .grip {
    margin-right: 3px;
}

.extrude h2 span {
    flex: 1;
}

.field {
    display: flex;
    align-items: center;
    height: 30px;
    padding-left: 11px;
}

.field label,
.field-name {
    width: 73px;
}

.type {
    width: 23px;
    height: 27px;
    margin-right: 8px;
}

.type.on,
.pick {
    background: #0696d7;
    color: #fff;
}

.pick {
    gap: 6px;
    width: 84px;
    height: 27px;
}

.clear {
    margin-left: 11px;
}

.combo {
    display: flex;
    align-items: center;
    width: 132px;
    height: 27px;
    padding: 0 5px 0 3px;
    border: 1px solid #ddd;
    background: #fff;
}

.combo select {
    flex: 1;
    margin-left: 4px;
    border: none;
    outline: none;
    background: none;
    appearance: none;
    color: inherit;
    font: inherit;
}

.field input {
    width: 132px;
    height: 26px;
    padding: 0 3px;
    border: 1px solid #ccc;
    color: inherit;
    font: inherit;
}

.rule {
    height: 3px;
    margin: 4px 13px 3px 1px;
    background: #c4c4c4;
}

.actions {
    display: flex;
    align-items: center;
    gap: 10px;
    height: 36px;
    margin-top: 1px;
    padding: 0 11px 0 8px;
    border-top: 1px solid #ccc;
}

.actions svg {
    margin-right: auto;
}

.actions button {
    width: 60px;
    height: 19px;
    border: 1px solid #b8b8b8;
    background: #e9e9e9;
    color: #666;
    font-size: 12px;
}

/* input beside the manipulator */
.float-input {
    position: absolute;
    top: 796px;
    left: 1093px;
    display: flex;
    align-items: center;
    width: 107px;
    height: 22px;
    background: #f1f1f1;
}

.handle {
    width: 8px;
    height: 20px;
    margin: 0 2px 0 4px;
    border-right: 2px solid #ddd;
    background: repeating-linear-gradient(45deg, #ccc 0, #ccc 1px, transparent 1px, transparent 3px);
}

.float-input input {
    width: 69px;
    height: 20px;
    border: 1px solid #c4c4c4;
    color: inherit;
    font: inherit;
    text-align: center;
}

.float-input button {
    flex: 1;
}

/* navigation bar */
.navbar {
    position: absolute;
    bottom: 4px;
    left: 50%;
    display: flex;
    justify-content: space-between;
    width: 237px;
    height: 24px;
    padding: 0 4px 0 3px;
    background: #f1f1f1;
    transform: translateX(-50%);
}

.navbar button {
    gap: 2px;
}

.navbar .spaced {
    gap: 5px;
}

.navbar .plain {
    padding: 0 1px;
}

.navbar svg {
    width: 16px;
    height: 16px;
}

.selection-info {
    position: absolute;
    right: 16px;
    bottom: 9px;
    color: #ddd;
    font-size: 12px;
    font-weight: bold;
}

/* timeline */
.timeline {
    display: flex;
    align-items: center;
    height: 50px;
    padding: 0 13px 0 9px;
    border-top: 2px solid #ccc;
    border-bottom: 2px solid #444;
}

.player {
    display: flex;
    gap: 9px;
    margin-right: 17px;
}

.player svg {
    width: 16px;
    height: 16px;
    fill: #444;
}

.features {
    position: relative;
    display: flex;
}

.features button {
    width: 24px;
    height: 24px;
}

.features .on {
    border-radius: 2px;
    background: #0696d7;
}

.features svg {
    width: 16px;
    height: 16px;
    overflow: visible;
}

.features .links {
    position: absolute;
    top: 23px;
    left: 12px;
    width: 75px;
    height: 7px;
}

.marker {
    width: 12px;
    height: 32px;
    margin-left: -6px;
}

.settings {
    margin-left: auto;
}
```
